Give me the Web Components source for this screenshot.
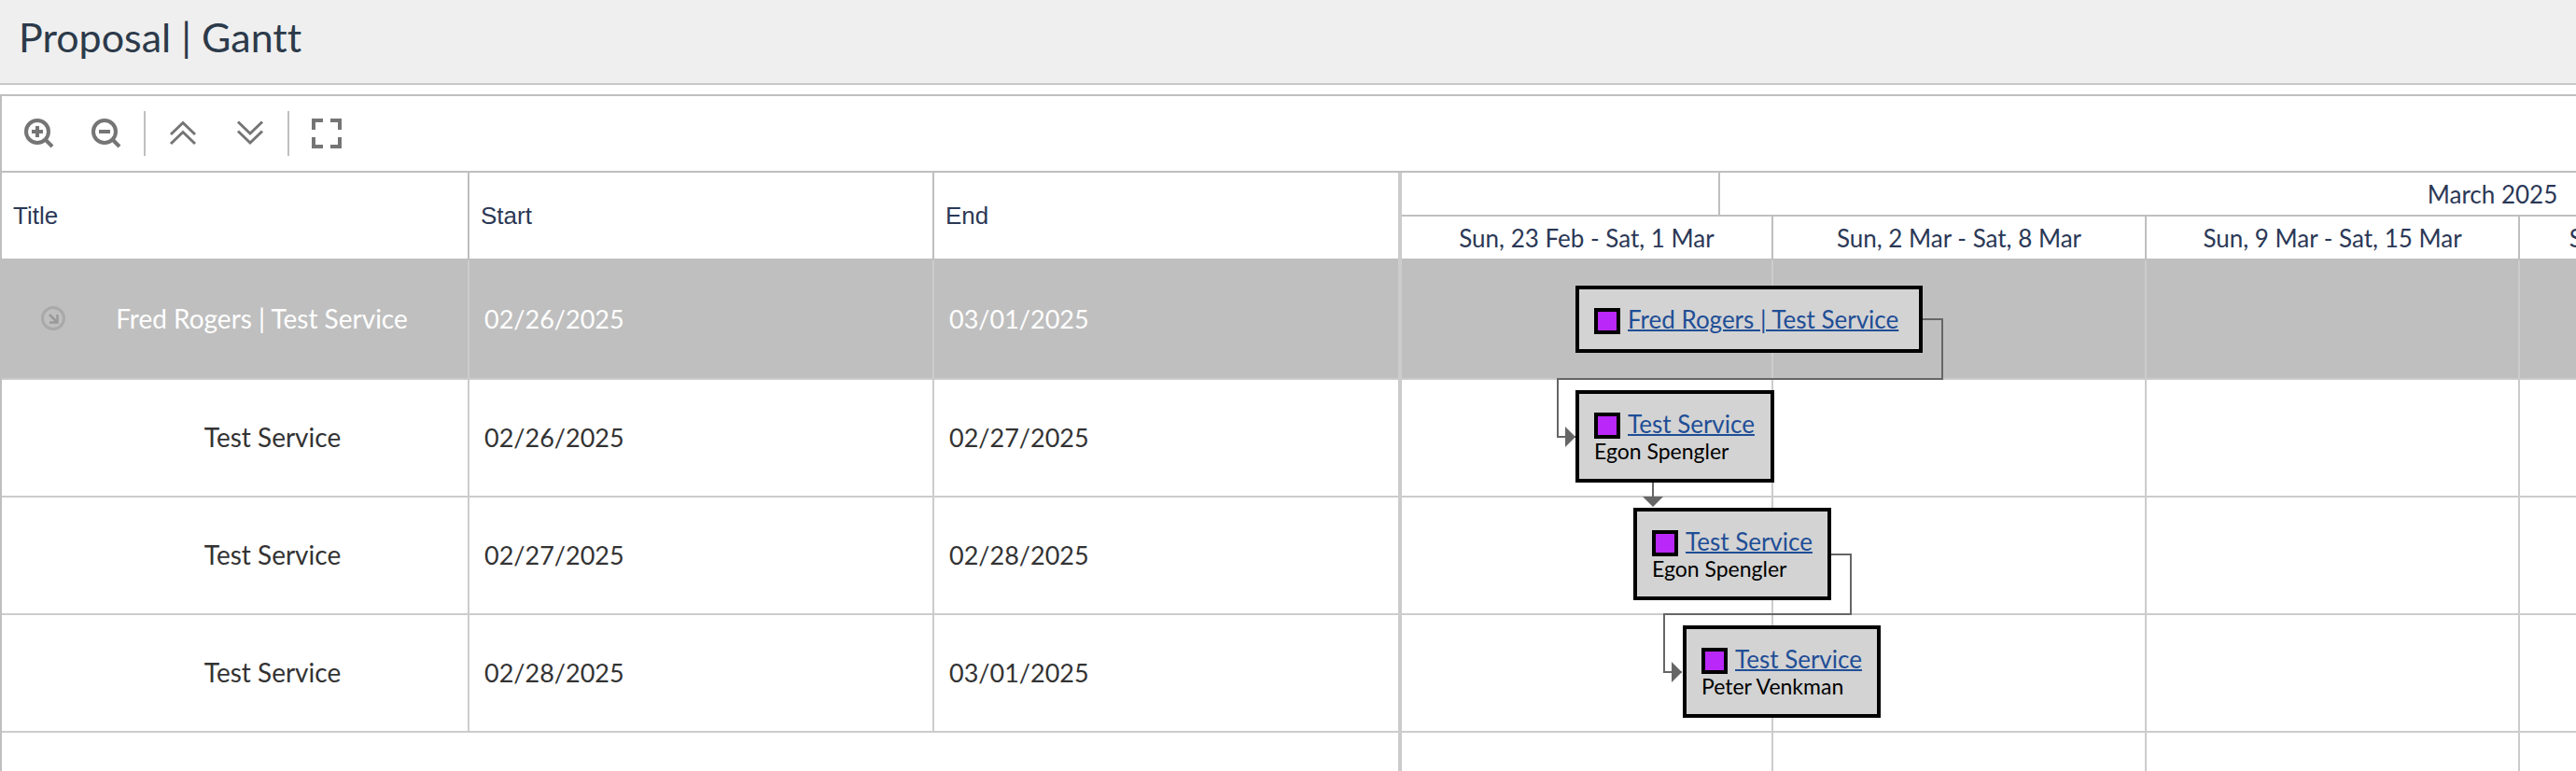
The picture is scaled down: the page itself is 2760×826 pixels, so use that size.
<!DOCTYPE html>
<html lang="en">
<head>
<meta charset="utf-8">
<title>Proposal | Gantt</title>
<style>
  body { margin: 0; background: #fff; font-family: Lato, "Liberation Sans", sans-serif; font-variant-ligatures: none; }
</style>
</head>
<body>
<gantt-page>
  <page-title slot="title">Proposal | Gantt</page-title>
  <gantt-toolbar slot="toolbar"></gantt-toolbar>
  <task-grid slot="grid"></task-grid>
  <gantt-timeline slot="timeline">
    <task-bar href="#fred" name="Fred Rogers | Test Service" style="left:186px;top:27px;width:372px;height:72px"></task-bar>
    <task-bar href="#t1" name="Test Service" style="left:186px;top:139px;width:213px;height:99px">Egon Spengler</task-bar>
    <task-bar href="#t2" name="Test Service" style="left:248px;top:265px;width:212px;height:99px">Egon Spengler</task-bar>
    <task-bar href="#t3" name="Test Service" style="left:301px;top:391px;width:212px;height:99px">Peter Venkman</task-bar>
  </gantt-timeline>
</gantt-page>

<script>
const define = (name, html, setup) => customElements.define(name, class extends HTMLElement {
  constructor() {
    super();
    this.attachShadow({ mode: 'open' }).innerHTML = '<style>*{box-sizing:border-box}:host{box-sizing:border-box}</style>' + html;
  }
  connectedCallback() { if (setup) setup(this, this.shadowRoot); }
});

define('page-title', `
<style>
  :host { display: block; background: #efefef; border-bottom: 2px solid #c8c8c8; padding: 16px 20px 25px; }
  h1 { margin: 0; font-size: 43px; line-height: 48px; font-weight: 400; color: #2c3a4a; }
</style>
<h1><slot></slot></h1>`);

define('gantt-page', `
<style>
  :host { display: flex; flex-direction: column; height: 100vh; overflow: hidden; }
  .gantt { flex: 1; min-height: 0; margin-top: 10px; border: 2px solid #bfbfbf; border-width: 2px 0 0 2px;
    display: flex; flex-direction: column; }
  .split { flex: 1; min-height: 0; display: grid; grid-template-columns: minmax(0, 1496fr) 4px minmax(0, 1258fr); }
  .splitter { background: #ccc; }
</style>
<slot name="title"></slot>
<main class="gantt">
  <slot name="toolbar"></slot>
  <div class="split">
    <slot name="grid"></slot>
    <div class="splitter" role="separator"></div>
    <slot name="timeline"></slot>
  </div>
</main>`);

define('gantt-toolbar', `
<style>
  :host { display: flex; align-items: center; height: 82px; padding: 0 4px; border-bottom: 2px solid #bfbfbf; }
  button { width: 72px; height: 72px; padding: 0; border: 0; background: none; display: grid; place-items: center; color: #757575; }
  svg { width: 32px; height: 32px; fill: none; stroke: currentColor; stroke-width: 4; }
  .chevrons { stroke-width: 3; }
  .sep { width: 2px; height: 48px; margin: 0 4px; background: #bfbfbf; }
</style>
<button aria-label="Zoom in"><svg viewBox="0 0 32 32"><circle cx="14" cy="14" r="12"/><path d="M22 22l8 8M8 14h12M14 8v12"/></svg></button>
<button aria-label="Zoom out"><svg viewBox="0 0 32 32"><circle cx="14" cy="14" r="12"/><path d="M22 22l8 8M8 14h12"/></svg></button>
<span class="sep"></span>
<button aria-label="Collapse all"><svg class="chevrons" viewBox="0 0 32 32"><path d="M3 17L16 4.500 29 17M3 27L16 14.500 29 27"/></svg></button>
<button aria-label="Expand all"><svg class="chevrons" viewBox="0 0 32 32"><path d="M3 3.500L16 16 29 3.500M3 13.500L16 26 29 13.500"/></svg></button>
<span class="sep"></span>
<button aria-label="Full screen"><svg viewBox="0 0 32 32"><path d="M2 12V2h10M20 2h10v10M30 20v10H20M12 30H2V20"/></svg></button>`);

define('task-grid', `
<style>
  :host { display: block; min-width: 0; }
  table { width: 100%; table-layout: fixed; border-collapse: separate; border-spacing: 0; }
  .c1 { width: 501px; } .c2 { width: 498px; }
  th, td { padding: 0 10px 2px 16px; text-align: left; font-weight: 400; border-bottom: 2px solid #ccc; }
  th { height: 94px; padding: 0 12px; font-family: "Liberation Sans", sans-serif; font-size: 26px; color: #2b3856; border-color: #bfbfbf; }
  th:not(:last-child) { border-right: 2px solid #bfbfbf; }
  td { height: 126px; font-size: 27px; color: #333; }
  td:not(:last-child) { border-right: 2px solid #ccc; }
  td:first-child { font-size: 28px; text-align: center; padding-left: 91px; }
  .selected td { height: 128px; background: #bfbfbf; color: #fff; }
  .selected td:first-child { padding-left: 42px; }
  .parent { display: flex; align-items: center; }
  .parent span { flex: 1; }
  button { border: 0; padding: 0; background: none; width: 26px; height: 26px; }
  svg { display: block; width: 26px; height: 26px; fill: none; }
</style>
<table>
  <colgroup><col class="c1"><col class="c2"><col></colgroup>
  <thead><tr><th>Title</th><th>Start</th><th>End</th></tr></thead>
  <tbody>
    <tr class="selected"><td><div class="parent">
      <button aria-label="Collapse"><svg viewBox="0 0 26 26"><circle cx="13" cy="13" r="11.500" stroke="#a9a9a9" stroke-width="3"/><path d="M9 9l8 8M17.500 9v8.500H9" stroke="#9a9a9a" stroke-width="2.500"/></svg></button>
      <span>Fred Rogers | Test Service</span></div></td><td>02/26/2025</td><td>03/01/2025</td></tr>
    <tr><td>Test Service</td><td>02/26/2025</td><td>02/27/2025</td></tr>
    <tr><td>Test Service</td><td>02/27/2025</td><td>02/28/2025</td></tr>
    <tr><td>Test Service</td><td>02/28/2025</td><td>03/01/2025</td></tr>
  </tbody>
</table>`);

define('gantt-timeline', `
<style>
  :host { display: flex; flex-direction: column; min-width: 0; overflow: hidden; }
  .months, .weeks, .columns { display: grid; grid-template-columns: 398px repeat(4, 400px); }
  .months { grid-template-columns: 341px 1657px; }
  .head span { height: 47px; line-height: 47px; text-align: center; font-size: 26px; color: #2b3856;
    border-right: 2px solid #bfbfbf; border-bottom: 2px solid #bfbfbf; white-space: nowrap; }
  .body { position: relative; flex: 1; }
  .row { height: 126px; border-bottom: 2px solid #ccc; }
  .selected { height: 128px; background: #bfbfbf; }
  .columns, svg { position: absolute; inset: 0; }
  .columns i { border-right: 2px solid #ccc; }
  svg { width: 100%; height: 100%; overflow: visible; }
  .link { fill: none; stroke: #666; stroke-width: 2; }
  .tip { fill: #666; }
</style>
<div class="head">
  <div class="months"><span></span><span>March 2025</span></div>
  <div class="weeks"><span>Sun, 23 Feb - Sat, 1 Mar</span><span>Sun, 2 Mar - Sat, 8 Mar</span><span>Sun, 9 Mar - Sat, 15 Mar</span><span>Sun, 16 Mar - Sat, 22 Mar</span><span></span></div>
</div>
<div class="body">
  <div class="row selected"></div><div class="row"></div><div class="row"></div><div class="row"></div>
  <div class="columns"><i></i><i></i><i></i><i></i><i></i></div>
  <svg aria-hidden="true">
    <path class="link" d="M558 63H579V127H167V189H186M269 238V254M460 315H481V379H281V441H300"/>
    <path class="tip" d="M175 178L186 189 175 200zM258 253H280L269 264zM289 430L300 441 289 452z"/>
  </svg>
  <slot></slot>
</div>`);

define('task-bar', `
<style>
  :host { position: absolute; border: 4px solid #000; background: #d3d3d3; padding: 16px; white-space: nowrap; }
  .title { display: flex; align-items: flex-end; gap: 8px; font-size: 26px; line-height: 32px; }
  i { width: 28px; height: 28px; border: 4px solid #000; background: #b928f8; }
  a { color: #1f4e96; text-decoration: underline; text-decoration-thickness: 2px; }
  .who { font-size: 23px; line-height: 26px; color: #000; }
</style>
<div class="title"><i></i><a></a></div>
<div class="who"><slot></slot></div>`, (el, root) => {
  const link = root.querySelector('a');
  link.href = el.getAttribute('href');
  link.textContent = el.getAttribute('name');
});
</script>
</body>
</html>
